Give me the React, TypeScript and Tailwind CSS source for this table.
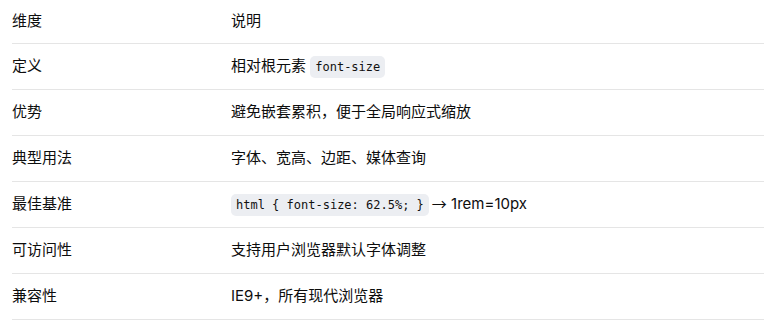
const ROWS: { k: string; v: React.ReactNode }[] = [
  {
    k: '定义',
    v: (
      <>
        相对根元素 <Code>font-size</Code>
      </>
    ),
  },
  { k: '优势', v: '避免嵌套累积，便于全局响应式缩放' },
  { k: '典型用法', v: '字体、宽高、边距、媒体查询' },
  {
    k: '最佳基准',
    v: (
      <>
        <Code>{'html { font-size: 62.5%; }'}</Code>
        <span className="ml-[3px] font-['Noto_Sans_CJK_SC',sans-serif]">→</span>
        {' 1rem=10px'}
      </>
    ),
  },
  { k: '可访问性', v: '支持用户浏览器默认字体调整' },
  { k: '兼容性', v: 'IE9+，所有现代浏览器' },
];

function Code({ children }: { children: React.ReactNode }) {
  return (
    <code className="inline-block rounded-[5px] bg-[#eceef2] px-[5px] py-[2px] font-['DejaVu_Sans_Mono',monospace] text-[12px] leading-[18px] text-[#111]">
      {children}
    </code>
  );
}

export default function App() {
  return (
    <div className="h-[325px] w-[767px] bg-white pl-3 pr-[3px] font-['Inter','Noto_Sans_CJK_SC',sans-serif] text-[15px] text-[#0d0d0d]">
      {/* header */}
      <div className="grid h-[44px] grid-cols-[219px_1fr] items-center border-b border-[#e5e5e5]">
        <div>维度</div>
        <div>说明</div>
      </div>

      {ROWS.map((r) => (
        <div
          key={r.k}
          className="grid h-[46px] grid-cols-[219px_1fr] items-center border-b border-[#e5e5e5]"
        >
          <div>{r.k}</div>
          <div className="flex items-center whitespace-pre">{r.v}</div>
        </div>
      ))}
    </div>
  );
}
